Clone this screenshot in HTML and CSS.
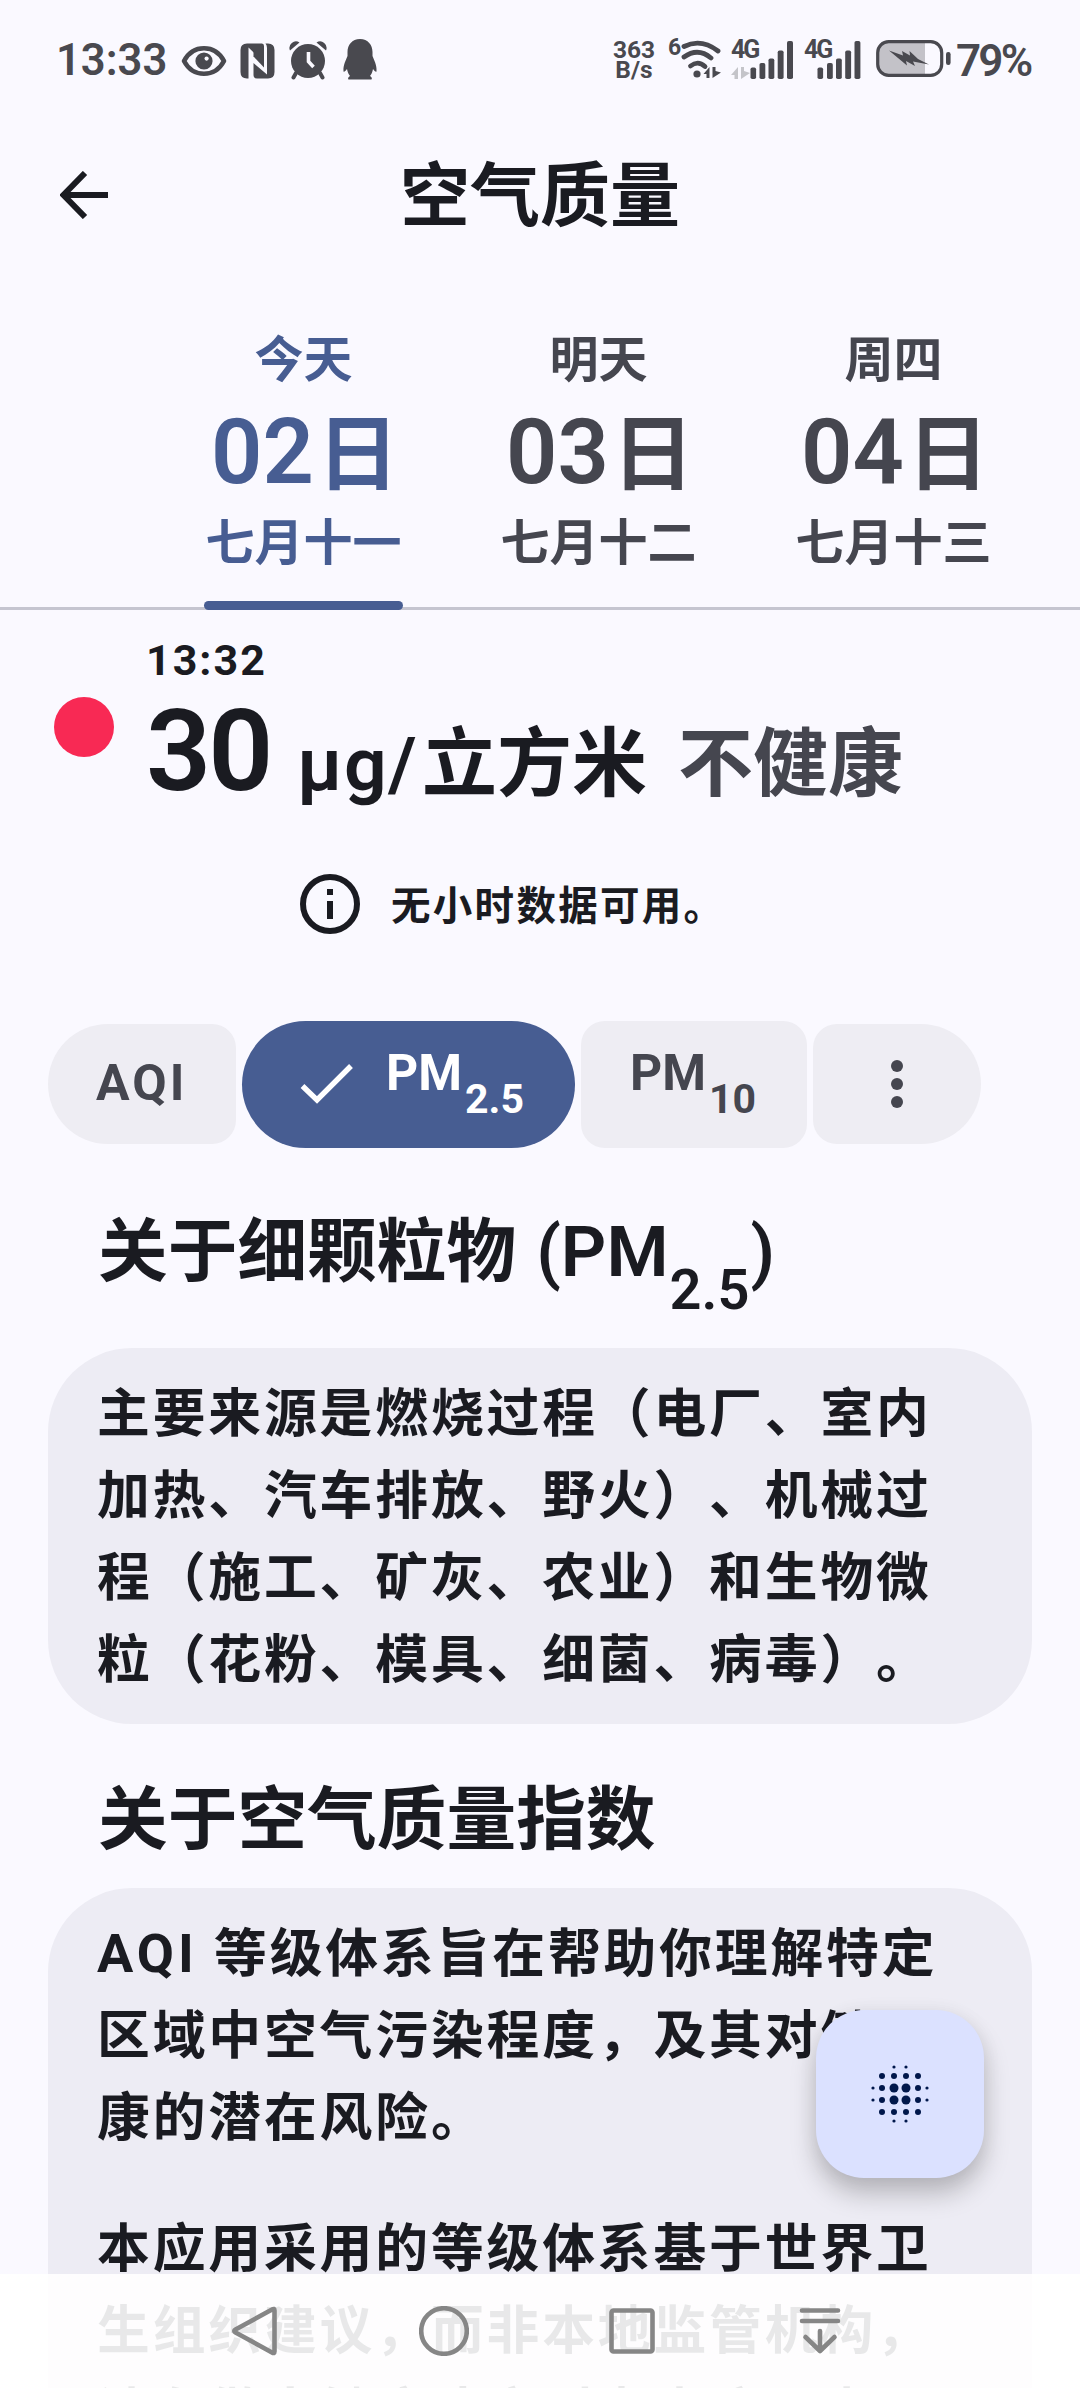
FILE: index.html
```html
<!DOCTYPE html>
<html lang="zh-CN">
<head>
<meta charset="utf-8">
<title>空气质量</title>
<link rel="stylesheet" href="styles.css">
</head>
<body>
<div class="screen">
  <header class="status">
    <div class="status-left">
      <span class="clock">13:33</span>
      <svg class="ic-eye" width="46" height="32" viewBox="0 0 46 32"><path d="M3 16C12-1 34-1 43 16C34 33 12 33 3 16Z" fill="none" stroke="#49494f" stroke-width="4.6" stroke-linejoin="round"/><circle cx="23" cy="16" r="8.6" fill="#49494f"/><circle cx="25.600" cy="13.600" r="2.100" fill="#faf9ff"/></svg>
      <svg class="ic-nfc" width="35" height="36" viewBox="0 0 35 36"><path d="M7 .5H22Q24 .5 24 3V19.500L8.500 4.500V35.500H7Q.5 35.500 .5 29V7Q.5 .5 7 .5Z" fill="#49494f"/><path d="M25.500 .5H28Q34.500 .5 34.500 7V29Q34.500 35.500 28 35.500H17Q13.500 35.500 13.500 32V20L27 31.500V5Q27 2 25.500 .5Z" fill="#49494f"/><path d="M13.500 13.500L24 24.500V16L13.500 7Z" fill="#49494f"/></svg>
      <svg class="ic-alarm" width="38" height="39" viewBox="0 0 38 39"><g fill="#49494f"><circle cx="19" cy="20" r="17"/><path d="M1 9.500A6.500 6.500 0 0 1 10.500 1.500ZM37 9.500A6.500 6.500 0 0 0 27.500 1.500Z"/></g><path d="M7 32L4.500 36.500M31 32L33.500 36.500" stroke="#49494f" stroke-width="4" stroke-linecap="round"/><path d="M19.500 11V20.500L24.500 26" fill="none" stroke="#faf9ff" stroke-width="3.600"/></svg>
      <svg class="ic-qq" width="34" height="41" viewBox="0 0 34 41"><path d="M17 0C25 0 29.500 6 29.500 13V17C31 21 34 26 33.500 32C33.500 34 31.500 32 30 30C29.500 33 28.500 35 27 37C29 38 29.500 40.500 28 40.500H6C4.500 40.500 5 38 7 37C5.500 35 4.500 33 4 30C2.500 32 .5 34 .5 32C0 26 3 21 4.500 17V13C4.500 6 9 0 17 0Z" fill="#49494f"/></svg>
    </div>
    <div class="status-right">
      <div class="speed"><span>363</span><span>B/s</span></div>
      <span class="wifi-gen">6</span>
      <svg class="ic-wifi" width="40" height="39" viewBox="0 0 40 39"><g fill="none" stroke="#49494f" stroke-width="4.800" stroke-linecap="round"><path d="M3 6.500Q20-2 37 11"/><path d="M3 17Q17 7 30 18"/><path d="M9.500 26Q17 20 24 26.500"/></g><circle cx="16" cy="34" r="3.600" fill="#49494f"/><path d="M28.500 38V27L22.500 34H25.500V38ZM31.500 27V38L40 32.500L34.500 31V27Z" fill="#49494f"/></svg>
      <div class="signal signal-a">
        <span class="net">4G</span>
        <svg width="63" height="38" viewBox="0 0 63 38"><path d="M7 38V26L0 34H3.500V38ZM10 26V38L19 32L13 30V26Z" fill="#c4c4c9"/><g fill="#49494f"><rect x="19.500" y="26.500" width="5.600" height="11.500" rx="1.800"/><rect x="28.500" y="22" width="5.800" height="16" rx="1.800"/><rect x="37.500" y="17.500" width="5.800" height="20.500" rx="1.800"/><rect x="46.700" y="9.500" width="5.900" height="28.500" rx="1.800"/><rect x="56" y="0" width="6" height="38" rx="1.800"/></g></svg>
      </div>
      <div class="signal signal-b">
        <span class="net">4G</span>
        <svg width="58" height="38" viewBox="0 0 58 38"><g fill="#49494f"><rect x="13.500" y="26.500" width="5.600" height="11.500" rx="1.800"/><rect x="23" y="22" width="5.800" height="16" rx="1.800"/><rect x="32" y="17.500" width="5.800" height="20.500" rx="1.800"/><rect x="41.200" y="9.500" width="5.900" height="28.500" rx="1.800"/><rect x="50.500" y="0" width="5.900" height="38" rx="1.800"/></g></svg>
      </div>
      <svg class="ic-batt" width="75" height="37" viewBox="0 0 75 37"><path d="M12 2H49V35H12Q2 35 2 25V12Q2 2 12 2Z" fill="#c3c2c8"/><rect x="1.700" y="1.700" width="64" height="33.600" rx="11" fill="none" stroke="#49494f" stroke-width="3.200"/><rect x="70" y="12" width="4.600" height="13" rx="2.200" fill="#49494f"/><path d="M13 10.500L27 15.500L26 11L34 15.500L33.500 11L42 19L53 24.500L37 21.500L39 26L30 21L31 25.500L22 18Z" fill="#49494f"/></svg>
      <span class="percent">79%</span>
    </div>
  </header>

  <div class="appbar">
    <svg class="back" width="48" height="48" viewBox="0 0 48 48"><path d="M25 2L3.500 24L25 46M4 24H48" fill="none" stroke="#1a1b21" stroke-width="6"/></svg>
    <h1>空气质量</h1>
  </div>

  <nav class="tabs">
    <div class="tab active"><span class="day">今天</span><span class="date">02<b>日</b></span><span class="lunar">七月十一</span><i class="bar"></i></div>
    <div class="tab"><span class="day">明天</span><span class="date">03<b>日</b></span><span class="lunar">七月十二</span></div>
    <div class="tab"><span class="day">周四</span><span class="date">04<b>日</b></span><span class="lunar">七月十三</span></div>
  </nav>

  <section class="reading">
    <span class="dot"></span>
    <div class="values">
      <div class="time">13:32</div>
      <div class="amount"><span class="num">30</span><span class="unit">μg/</span><span class="unit-cn">立方米</span><span class="level">不健康</span></div>
    </div>
  </section>

  <div class="notice">
    <svg width="60" height="60" viewBox="0 0 60 60"><circle cx="30" cy="30" r="27" fill="none" stroke="#1a1b21" stroke-width="6"/><path d="M30 15V21M30 27V45" stroke="#1a1b21" stroke-width="6"/></svg>
    <span>无小时数据可用。</span>
  </div>

  <div class="chips">
    <div class="chip first"><span class="label aqi">AQI</span></div>
    <div class="chip selected"><svg width="54" height="42" viewBox="0 0 54 42"><path d="M2.500 23L17 37L51 3" fill="none" stroke="#fff" stroke-width="5.400"/></svg><span class="label">PM</span><span class="sub">2.5</span></div>
    <div class="chip tall"><span class="label">PM</span><span class="sub">10</span></div>
    <div class="chip last"><svg width="12" height="48" viewBox="0 0 12 48"><g fill="#45464f"><circle cx="6" cy="6" r="6"/><circle cx="6" cy="24" r="6"/><circle cx="6" cy="42" r="6"/></g></svg></div>
  </div>

  <h2 class="about-pm"><span>关于细颗粒物</span><span class="lat">(PM</span><span class="hsub">2.5</span><span class="paren">)</span></h2>
  <article class="card">
    <p>主要来源是燃烧过程（电厂、室内<br>加热、汽车排放、野火）、机械过<br>程（施工、矿灰、农业）和生物微<br>粒（花粉、模具、细菌、病毒）。</p>
  </article>

  <h2 class="about-aqi">关于空气质量指数</h2>
  <article class="card">
    <p><span class="word">AQI</span>等级体系旨在帮助你理解特定<br>区域中空气污染程度，及其对健<br>康的潜在风险。</p>
    <p>本应用采用的等级体系基于世界卫<br>生组织建议，而非本地监管机构，<br>请在做出健康决定时考虑这一点。</p>
  </article>

  <div class="fab">
    <svg width="60" height="60" viewBox="0 0 60 60"><g fill="#00174b">
      <circle cx="24" cy="24" r="4.500"/><circle cx="36" cy="24" r="4.500"/><circle cx="24" cy="36" r="4.500"/><circle cx="36" cy="36" r="4.500"/>
      <circle cx="12" cy="12" r="3"/><circle cx="24" cy="12" r="3"/><circle cx="36" cy="12" r="3"/><circle cx="48" cy="12" r="3"/>
      <circle cx="12" cy="24" r="3"/><circle cx="48" cy="24" r="3"/><circle cx="12" cy="36" r="3"/><circle cx="48" cy="36" r="3"/>
      <circle cx="12" cy="48" r="3"/><circle cx="24" cy="48" r="3"/><circle cx="36" cy="48" r="3"/><circle cx="48" cy="48" r="3"/>
      <circle cx="24" cy="3" r="1.600"/><circle cx="36" cy="3" r="1.600"/><circle cx="24" cy="57" r="1.600"/><circle cx="36" cy="57" r="1.600"/>
      <circle cx="3" cy="24" r="1.600"/><circle cx="3" cy="36" r="1.600"/><circle cx="57" cy="24" r="1.600"/><circle cx="57" cy="36" r="1.600"/>
    </g></svg>
  </div>

  <div class="sysnav">
    <svg width="50" height="50" viewBox="0 0 50 50"><path d="M43.500 4.500V45.500Q43.500 48 41 46.500L4.500 26.500Q2 25 4.500 23.500L41 3.500Q43.500 2 43.500 4.500Z"/></svg>
    <svg width="50" height="50" viewBox="0 0 50 50"><circle cx="25" cy="25" r="22.800"/></svg>
    <svg width="50" height="50" viewBox="0 0 50 50"><rect x="4.500" y="4.500" width="41" height="41" rx="2"/></svg>
    <svg width="50" height="50" viewBox="0 0 50 50"><path d="M7 4.500H43M7 15H43M25 25V44M10.500 31L25 45L39.500 31"/></svg>
  </div>
</div>
</body>
</html>
```
FILE: styles.css
```css
* { box-sizing: border-box; margin: 0; padding: 0; }
body { background: #faf9ff; }
svg { display: block; flex: none; }

.screen {
  position: relative;
  width: 1080px;
  height: 2388px;
  overflow: hidden;
  background: #faf9ff;
  color: #1a1b21;
  font-family: Roboto, "Noto Sans CJK SC", sans-serif;
  font-weight: 700;
  white-space: nowrap;
  text-spacing-trim: space-all;
}

/* status bar */
.status { display: flex; justify-content: space-between; height: 120px; padding: 0 48px 0 56px; color: #49494f; }
.status-left, .status-right { display: flex; align-items: flex-start; }
.clock { width: 124px; font-size: 43.500px; line-height: 122px; font-weight: 600; }
.ic-eye { margin: 45px 13px 0 1px; }
.ic-nfc { margin: 43px 14px 0 0; }
.ic-alarm { margin: 41px 16px 0 0; }
.ic-qq { margin-top: 39px; }
.speed { display: flex; flex-direction: column; width: 46px; margin: 40px 11px 0 -1px; align-items: center; font-size: 24.500px; line-height: 20px; }
.wifi-gen { width: 13px; margin-top: 37px; font-size: 23px; line-height: 22px; }
.ic-wifi { margin: 40px 10px 0 0; }
.signal { display: flex; position: relative; margin-top: 41px; }
.signal-a { margin-right: 10px; }
.signal-b { margin-right: 14px; }
.net { position: absolute; left: 0; top: -1px; font-size: 25px; line-height: 20px; letter-spacing: -2px; }
.ic-batt { margin: 40px 5px 0 0; }
.percent { width: 76px; font-size: 44px; line-height: 122px; letter-spacing: -2.800px; font-weight: 600; }

/* app bar */
.appbar { display: flex; align-items: center; height: 150px; padding-left: 60px; }
.appbar h1 { width: 864px; padding-top: 4px; text-align: center; font-size: 70px; line-height: 156px; }

/* day tabs */
.tabs { display: flex; height: 340px; padding: 54px 0 0 156px; border-bottom: 3px solid #c5c5d0; color: #45464f; }
.tab { position: relative; flex: none; display: flex; flex-direction: column; align-items: center; width: 295px; }
.day { height: 74px; font-size: 49px; line-height: 74px; }
.date { height: 107px; font-size: 90px; line-height: 110px; font-weight: 600; }
.date b { margin: 0 -3px 0 3px; font-size: 82px; font-weight: 600; }
.lunar { height: 78px; font-size: 49px; line-height: 78px; }
.active { color: #475d92; }
.bar { position: absolute; left: 48px; bottom: -3px; width: 199px; height: 9px; border-radius: 5px; background: #475d92; }

/* current reading */
.reading { display: flex; height: 222px; padding: 26px 0 0 54px; }
.dot { width: 60px; height: 60px; margin: 61px 32px 0 0; border-radius: 50%; background: #f82954; }
.time { font-size: 43px; line-height: 49px; height: 50px; letter-spacing: 2px; }
.amount { display: flex; align-items: baseline; height: 130px; line-height: 130px; }
.num { width: 151px; font-size: 114px; font-weight: 600; letter-spacing: -3px; }
.unit { width: 125px; font-size: 75px; font-weight: 600; letter-spacing: 1.500px; }
.unit-cn { width: 256px; font-size: 75px; }
.level { font-size: 75px; color: #45464f; }

.notice { display: flex; align-items: center; height: 144px; padding-left: 300px; gap: 31px; font-size: 39.500px; letter-spacing: 2.300px; }
.notice span { padding-bottom: 3px; }

/* pollutant chips */
.chips { display: flex; align-items: center; gap: 6px; height: 216px; padding-left: 48px; color: #45464f; }
.chip { display: flex; align-items: center; height: 120px; background: #eeedf3; }
.chip .label { font-size: 50px; line-height: 60px; }
.chip .aqi { padding-bottom: 2px; letter-spacing: 3px; }
.chip .sub { font-size: 41px; line-height: 60px; margin: 29px 0 0 3px; }
.first { width: 188px; padding-left: 48px; border-radius: 60px 24px 24px 60px; }
.selected { width: 333px; height: 127px; padding-left: 58px; border-radius: 64px; background: #475d92; color: #fff; }
.selected svg { margin-right: 32px; }
.tall { width: 226px; height: 127px; padding-left: 49px; border-radius: 24px; }
.last { width: 168px; justify-content: center; border-radius: 24px 60px 60px 24px; }
.selected .label, .tall .label { margin-bottom: 22px; }

/* explanations */
h2 { padding-left: 98px; font-size: 69.700px; }
.about-pm { display: flex; height: 156px; line-height: 120px; }
.lat { margin-left: 20px; font-size: 71px; font-weight: 600; }
.hsub { margin: 38px 0 0 1px; font-size: 56px; font-weight: 600; }
.paren { margin-left: 1px; font-weight: 600; }
.about-aqi { height: 164px; line-height: 192px; }
.card { margin: 0 48px; padding: 25px 0 23px 49px; border-radius: 84px; background: #edecf4; }
.card p { font-size: 52.800px; line-height: 82px; letter-spacing: 2.850px; }
.card p + p { margin-top: 49px; }
.word { display: inline-block; width: 117px; font-size: 54px; letter-spacing: 4px; line-height: 60px; }

/* floating button over the content */
.fab {
  position: absolute; left: 816px; top: 2010px; width: 168px; height: 168px;
  display: flex; align-items: center; justify-content: center;
  border-radius: 48px; background: #dbe1ff;
  box-shadow: 0 16px 26px rgba(0, 0, 0, .22), 0 2px 20px rgba(0, 0, 0, .06);
}

/* translucent system navigation */
.sysnav {
  position: absolute; left: 0; bottom: 0; width: 100%; height: 114px;
  display: flex; gap: 138px; padding: 32px 0 0 231px;
  background: rgba(255, 255, 255, .9);
}
.sysnav svg { fill: none; stroke: #868686; stroke-width: 4.600; stroke-linecap: round; stroke-linejoin: round; }
```
